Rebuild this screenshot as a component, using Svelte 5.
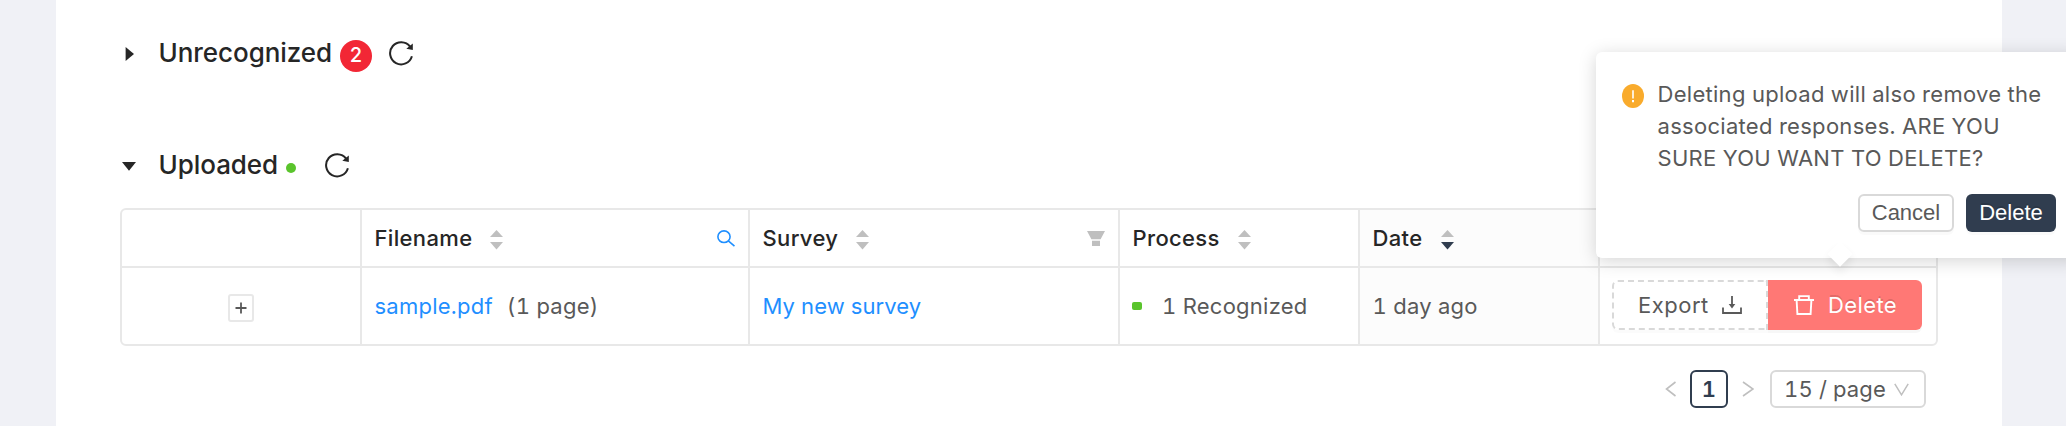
<script lang="ts">
  type Column = {
    key: string
    title: string
    icon?: 'search' | 'filter'
    sorted?: boolean
  }

  const columns: Column[] = [
    { key: 'filename', title: 'Filename', icon: 'search' },
    { key: 'survey', title: 'Survey', icon: 'filter' },
    { key: 'process', title: 'Process' },
    { key: 'date', title: 'Date', sorted: true },
  ]

  let unrecognizedOpen = $state(false)
  let uploadedOpen = $state(true)
  let confirmOpen = $state(true)
</script>

{#snippet caret(open: boolean)}
  <svg class="caret" width="16" height="16" viewBox="0 0 16 16">
    {#if open}
      <path d="M1 4h14L8 12.8z" />
    {:else}
      <path d="M4.6 1v14L13 8z" />
    {/if}
  </svg>
{/snippet}

{#snippet reload()}
  <svg class="reload" width="26" height="26" viewBox="0 0 26 26">
    <path class="line" d="M22.1 6.6A11.1 11.1 0 1 0 23.9 16.2" />
    <path d="M24.8 3.6v6.5l-6.5-1.3z" />
  </svg>
{/snippet}

<div class="page">
  <main class="panel">
    <header class="section">
      <button class="toggle" aria-label="Toggle" onclick={() => (unrecognizedOpen = !unrecognizedOpen)}>
        {@render caret(unrecognizedOpen)}
      </button>
      <h2 class="t-unrecognized">Unrecognized</h2>
      <span class="badge">2</span>
      {@render reload()}
    </header>

    <header class="section second">
      <button class="toggle" aria-label="Toggle" onclick={() => (uploadedOpen = !uploadedOpen)}>
        {@render caret(uploadedOpen)}
      </button>
      <h2 class="t-uploaded">Uploaded</h2>
      <span class="dot"></span>
      {@render reload()}
    </header>

    {#if uploadedOpen}
      <div class="table">
        <div class="row head">
          <div class="cell"></div>
          {#each columns as column (column.key)}
            <div class="cell" class:sorted={column.sorted}>
              <span class="title">{column.title}</span>
              <svg class="sorter" width="13" height="20" viewBox="0 0 13 20">
                <path d="M6.5 0L13 7H0z" />
                <path class="down" d="M0 12h13l-6.5 7.5z" />
              </svg>
              {#if column.icon === 'search'}
                <svg class="tool search" width="18" height="17" viewBox="0 0 18 17">
                  <ellipse cx="7" cy="6.7" rx="6.1" ry="5.8" />
                  <path d="M11.3 10.8l6.2 5.3" />
                </svg>
              {:else if column.icon === 'filter'}
                <svg class="tool" width="18" height="15" viewBox="0 0 18 15">
                  <path d="M0 0h18l-4.4 8.2H4.4zM5 9.8h8V15H5z" />
                </svg>
              {/if}
            </div>
          {/each}
          <div class="cell"></div>
        </div>

        <div class="row body">
          <div class="cell center">
            <button class="expand" aria-label="Expand row">
              <svg width="12" height="12" viewBox="0 0 12 12"><path d="M6 0.5v11M0.5 6h11" /></svg>
            </button>
          </div>
          <div class="cell">
            <a href="#sample">sample.pdf</a>
            <span class="pages">(1 page)</span>
          </div>
          <div class="cell"><a href="#survey" class="survey-link">My new survey</a></div>
          <div class="cell process">
            <span class="status"></span>
            <span>1 Recognized</span>
          </div>
          <div class="cell sorted"><span>1 day ago</span></div>
          <div class="cell actions">
            <button class="export">
              <span>Export</span>
              <svg width="20" height="18" viewBox="0 0 20 18">
                <path class="line" d="M1 11.5V17h18v-5.5M10 0v9" />
                <path d="M6.7 8h6.6L10 12.5z" />
              </svg>
            </button>
            <button class="delete" onclick={() => (confirmOpen = !confirmOpen)}>
              <svg width="20" height="20" viewBox="0 0 20 20">
                <path d="M0 5h20M2.6 5l.8 14h13.2l.8-14M5.2 5V1.1h9.6V5" />
              </svg>
              <span>Delete</span>
            </button>
          </div>
        </div>
      </div>

      <nav class="pagination">
        <svg class="arrow" width="12" height="16" viewBox="0 0 12 16"><path d="M10.5 1L1.5 8l9 7" /></svg>
        <button class="current">1</button>
        <svg class="arrow next" width="12" height="16" viewBox="0 0 12 16"><path d="M1 1l10 7-10 7" /></svg>
        <button class="size">
          <span>15 / page</span>
          <svg width="15" height="13" viewBox="0 0 15 13"><path d="M.8.8l6.7 11 6.7-11" /></svg>
        </button>
      </nav>
    {/if}
  </main>

  {#if confirmOpen}
    <div class="popconfirm" role="dialog">
      <div class="message">
        <svg width="22" height="24" viewBox="0 0 22 24">
          <ellipse cx="11" cy="12" rx="11" ry="12" />
          <path d="M10.2 6.2h1.6v8.2h-1.6zM10 16h2v2.2h-2z" />
        </svg>
        <p>
          Deleting upload will also remove the<br />
          associated responses. ARE YOU<br />
          SURE YOU WANT TO DELETE?
        </p>
      </div>
      <div class="buttons">
        <button class="cancel" onclick={() => (confirmOpen = false)}>Cancel</button>
        <button class="confirm" onclick={() => (confirmOpen = false)}>Delete</button>
      </div>
    </div>
  {/if}
</div>

<style>
  :global(body) {
    background: #f0f1f6;
  }

  .page {
    position: relative;
    box-sizing: border-box;
    height: 426px;
    padding: 0 64px 0 56px;
    overflow: hidden;
    background: #f0f1f6;
    color: #595959;
    font: 22px/32px Inter, sans-serif;
    font-variant-numeric: tabular-nums;
    letter-spacing: 0.25px;
  }

  .page * {
    box-sizing: border-box;
  }

  .panel {
    height: 426px;
    padding: 32px 64px 0;
    background: #fff;
  }

  button {
    display: flex;
    align-items: center;
    margin: 0;
    padding: 0;
    border: none;
    background: none;
    color: inherit;
    font: inherit;
    font-variant-numeric: inherit;
    letter-spacing: inherit;
    cursor: pointer;
  }

  svg {
    display: block;
    flex: none;
  }

  .section {
    display: flex;
    align-items: center;
    height: 44px;
    color: #262626;
  }

  .section.second {
    margin-top: 68px;
  }

  .toggle {
    width: 38px;
    padding-left: 1px;
  }

  .caret {
    fill: #262626;
  }

  h2 {
    margin: 0 0 2px;
    padding-left: 0.5px;
    font-size: 26px;
    font-weight: 500;
    line-height: 40px;
    letter-spacing: -0.05px;
    white-space: nowrap;
  }

  .t-unrecognized {
    width: 182px;
  }

  .t-uploaded {
    width: 128px;
  }

  .badge {
    width: 32px;
    height: 32px;
    margin: 4px 16px 0 0;
    border-radius: 50%;
    background: #f22735;
    color: #fff;
    font-size: 20px;
    font-weight: 500;
    line-height: 31px;
    text-align: center;
    letter-spacing: 0;
  }

  .dot {
    width: 10px;
    height: 10px;
    margin: 4px 28px 0 0;
    border-radius: 50%;
    background: #5ac42c;
  }

  .reload {
    margin-bottom: 2px;
    fill: #262626;
  }

  .reload .line {
    fill: none;
    stroke: #262626;
    stroke-width: 2;
  }

  .table {
    margin-top: 20px;
    overflow: hidden;
    border: 2px solid #e8e8e8;
    border-radius: 6px;
  }

  .row {
    display: grid;
    grid-template-columns: 240px 388px 370px 240px 240px 1fr;
  }

  .head {
    height: 56px;
  }

  .body {
    height: 78px;
    border-top: 2px solid #e8e8e8;
  }

  .cell {
    display: flex;
    align-items: center;
    padding: 0 13px 0 12.5px;
    border-right: 2px solid #e8e8e8;
    white-space: nowrap;
  }

  .cell:last-child {
    border-right: none;
  }

  .cell.sorted {
    background: #fcfcfc;
  }

  .cell.process {
    padding-left: 12px;
  }

  .cell.actions {
    align-items: flex-start;
    padding: 12px 12px 0;
  }

  .title {
    color: #262626;
    font-weight: 500;
    letter-spacing: 0.35px;
  }

  .sorter {
    margin: 3px 0 0 18px;
    fill: #bfbfbf;
  }

  .sorted .sorter {
    margin-left: 19px;
  }

  .sorted .sorter .down {
    fill: #303d4f;
  }

  .tool {
    margin-left: auto;
    fill: #bfbfbf;
  }

  .tool.search {
    fill: none;
    stroke: #1f8fff;
    stroke-width: 1.6;
  }

  .center {
    justify-content: center;
  }

  .expand {
    justify-content: center;
    width: 26px;
    height: 28px;
    margin-top: 3px;
    border: 2px solid #e8e8e8;
    border-radius: 3px;
  }

  .expand path {
    stroke: #595959;
    stroke-width: 1.8;
  }

  a {
    color: #1f8fff;
    text-decoration: none;
  }

  .survey-link {
    letter-spacing: 0.1px;
  }

  .pages {
    margin-left: 14px;
  }

  .status {
    width: 10px;
    height: 8px;
    margin-right: 20px;
    border-radius: 2px;
    background: #5ac42c;
  }

  .export {
    justify-content: space-between;
    width: 156px;
    height: 50px;
    padding: 0 24px;
    border: 2px dashed #d9d9d9;
    border-radius: 6px 0 0 6px;
    box-shadow: 0 3px 0 rgba(0, 0, 0, 0.015);
    letter-spacing: 0.5px;
  }

  .export svg {
    fill: #595959;
  }

  .export .line {
    fill: none;
    stroke: #595959;
    stroke-width: 1.8;
  }

  .delete {
    gap: 14px;
    width: 154px;
    height: 50px;
    padding-left: 26px;
    border-radius: 0 6px 6px 0;
    background: #ff7875;
    color: #fff;
    text-shadow: 0 -2px 0 rgba(0, 0, 0, 0.12);
    box-shadow: 0 3px 0 rgba(0, 0, 0, 0.03);
    letter-spacing: 0.4px;
  }

  .delete path {
    fill: none;
    stroke: #fff;
    stroke-width: 1.9;
  }

  .pagination {
    display: flex;
    align-items: center;
    justify-content: flex-end;
    margin-top: 24px;
    padding-right: 12px;
  }

  .arrow {
    fill: none;
    stroke: #bfbfbf;
    stroke-width: 1.6;
  }

  .arrow.next {
    margin: 0 16px 0 14px;
  }

  .current {
    justify-content: center;
    width: 38px;
    height: 38px;
    margin-left: 13px;
    border: 2px solid #303d4f;
    border-radius: 6px;
    color: #303d4f;
    font-weight: 600;
  }

  .size {
    gap: 8px;
    width: 156px;
    height: 38px;
    padding-left: 12px;
    border: 2px solid #d9d9d9;
    border-radius: 6px;
    letter-spacing: 0.15px;
  }

  .size path {
    fill: none;
    stroke: #bfbfbf;
    stroke-width: 1.5;
  }

  .popconfirm {
    position: absolute;
    top: 52px;
    left: 1596px;
    width: 486px;
    height: 206px;
    padding: 26px 26px 0;
    border-radius: 6px;
    background: #fff;
    box-shadow: 0 3px 18px rgba(0, 0, 0, 0.17);
  }

  .popconfirm::after {
    content: '';
    position: absolute;
    top: 193px;
    left: 235px;
    width: 18px;
    height: 18px;
    transform: rotate(45deg);
    background: #fff;
    box-shadow: 4px 4px 8px rgba(0, 0, 0, 0.07);
  }

  .message {
    display: flex;
    gap: 13.5px;
    letter-spacing: 0.29px;
  }

  .message svg {
    margin-top: 6px;
    fill: #f9ab2c;
  }

  .message svg path {
    fill: #fff;
  }

  p {
    margin: 0;
    white-space: nowrap;
  }

  .buttons {
    display: flex;
    gap: 12px;
    margin-top: 20px;
    padding-left: 236px;
    font-family: 'Liberation Sans', sans-serif;
    letter-spacing: 0;
  }

  .cancel,
  .confirm {
    justify-content: center;
    height: 38px;
    padding-bottom: 1px;
    border-radius: 6px;
    box-shadow: 0 3px 0 rgba(0, 0, 0, 0.02);
  }

  .cancel {
    width: 96px;
    border: 2px solid #d9d9d9;
  }

  .confirm {
    width: 90px;
    background: #303d4f;
    color: #fff;
    text-shadow: 0 -2px 0 rgba(0, 0, 0, 0.12);
  }
</style>
